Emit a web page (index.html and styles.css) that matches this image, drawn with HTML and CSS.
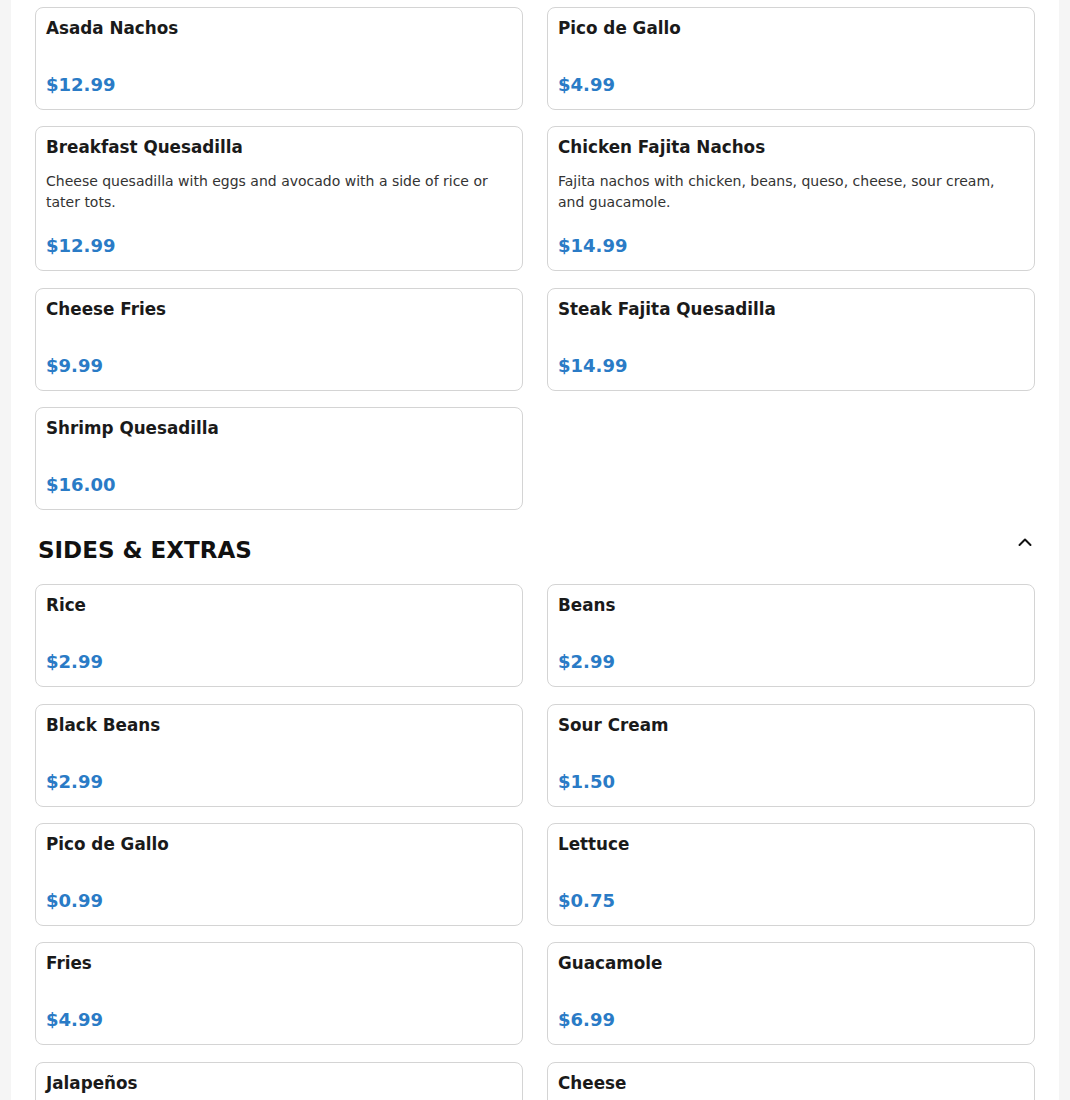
FILE: index.html
```html
<!DOCTYPE html>
<html lang="en">
<head>
<meta charset="utf-8">
<title>Menu</title>
<link rel="stylesheet" href="styles.css">
</head>
<body>
<main class="page">
  <section class="section">
    <div class="grid">
      <div class="card"><h3 class="title">Asada Nachos</h3><p class="desc"></p><div class="price">$12.99</div></div>
      <div class="card"><h3 class="title">Pico de Gallo</h3><p class="desc"></p><div class="price">$4.99</div></div>
      <div class="card"><h3 class="title">Breakfast Quesadilla</h3><p class="desc">Cheese quesadilla with eggs and avocado with a side of rice or tater tots.</p><div class="price">$12.99</div></div>
      <div class="card"><h3 class="title">Chicken Fajita Nachos</h3><p class="desc">Fajita nachos with chicken, beans, queso, cheese, sour cream, and guacamole.</p><div class="price">$14.99</div></div>
      <div class="card"><h3 class="title">Cheese Fries</h3><p class="desc"></p><div class="price">$9.99</div></div>
      <div class="card"><h3 class="title">Steak Fajita Quesadilla</h3><p class="desc"></p><div class="price">$14.99</div></div>
      <div class="card"><h3 class="title">Shrimp Quesadilla</h3><p class="desc"></p><div class="price">$16.00</div></div>
    </div>
  </section>
  <section class="section">
    <div class="section-head">
      <h2 class="section-title">SIDES &amp; EXTRAS</h2>
      <svg class="chevron" width="14" height="10" viewBox="0 0 14 10"><path d="M1.5 8 L7 2.5 L12.5 8" fill="none" stroke="#111" stroke-width="2" stroke-linecap="round" stroke-linejoin="round"/></svg>
    </div>
    <div class="grid">
      <div class="card"><h3 class="title">Rice</h3><p class="desc"></p><div class="price">$2.99</div></div>
      <div class="card"><h3 class="title">Beans</h3><p class="desc"></p><div class="price">$2.99</div></div>
      <div class="card"><h3 class="title">Black Beans</h3><p class="desc"></p><div class="price">$2.99</div></div>
      <div class="card"><h3 class="title">Sour Cream</h3><p class="desc"></p><div class="price">$1.50</div></div>
      <div class="card"><h3 class="title">Pico de Gallo</h3><p class="desc"></p><div class="price">$0.99</div></div>
      <div class="card"><h3 class="title">Lettuce</h3><p class="desc"></p><div class="price">$0.75</div></div>
      <div class="card"><h3 class="title">Fries</h3><p class="desc"></p><div class="price">$4.99</div></div>
      <div class="card"><h3 class="title">Guacamole</h3><p class="desc"></p><div class="price">$6.99</div></div>
      <div class="card"><h3 class="title">Jalapeños</h3><p class="desc"></p><div class="price">$0.99</div></div>
      <div class="card"><h3 class="title">Cheese</h3><p class="desc"></p><div class="price">$1.50</div></div>
    </div>
  </section>
</main>
</body>
</html>
```

FILE: styles.css
```css
* { box-sizing: border-box; }
html, body { margin: 0; padding: 0; }
body {
  background: #f5f5f5;
  font-family: "DejaVu Sans", Verdana, sans-serif;
  color: #1a1a1a;
}
.page {
  width: 1048px;
  margin: 0 auto;
  background: #ffffff;
  padding: 7px 24px 40px;
}
.grid {
  display: grid;
  grid-template-columns: 1fr 1fr;
  column-gap: 24px;
  row-gap: 16.4px;
  align-items: start;
}
.card {
  display: flex;
  flex-direction: column;
  border: 1px solid #d4d4d4;
  border-radius: 8px;
  padding: 10px 10px 13px;
  background: #fff;
}
.title {
  margin: 0 0 13px;
  font-size: 16.8px;
  line-height: 21px;
  font-weight: bold;
  color: #1a1a1a;
}
.desc {
  margin: 0;
  font-size: 14px;
  line-height: 21px;
  color: #333;
}
.price {
  margin-top: 22px;
  font-size: 18px;
  line-height: 22px;
  font-weight: bold;
  color: #2a7bc6;
}
.section-head {
  display: flex;
  justify-content: space-between;
  align-items: flex-start;
  margin: 26px 0 20px;
  padding: 0 3px 0 3px;
}
.section-title {
  margin: 0;
  font-size: 23px;
  line-height: 28px;
  font-weight: bold;
  color: #111;
}
.chevron {
  margin-top: 1px;
}
```
